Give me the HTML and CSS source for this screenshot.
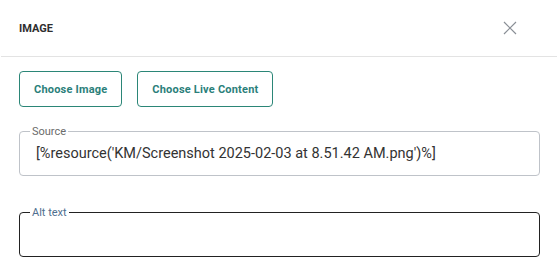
FILE: index.html
```html
<!DOCTYPE html>
<html lang="en">
<head>
    <meta charset="UTF-8">
    <meta name="viewport" content="width=device-width, initial-scale=1.0">
    <title>Image</title>
    <link rel="stylesheet" href="styles.css">
</head>
<body>
    <div class="dialog">
        <div class="dialog-header">
            <h2>IMAGE</h2>
            <button class="close" aria-label="Close">
                <svg width="14" height="14" viewBox="0 0 14 14">
                    <path d="M1 1 L13 13 M13 1 L1 13" stroke="#8a8f96" stroke-width="1.2" fill="none"/>
                </svg>
            </button>
        </div>
        <div class="dialog-body">
            <div class="actions">
                <button class="btn">Choose Image</button>
                <button class="btn">Choose Live Content</button>
            </div>
            <fieldset class="field source">
                <legend>Source</legend>
                <input type="text" value="[%resource('KM/Screenshot 2025-02-03 at 8.51.42 AM.png')%]">
            </fieldset>
            <fieldset class="field alt">
                <legend>Alt text</legend>
                <input type="text" value="">
            </fieldset>
        </div>
    </div>
</body>
</html>
```

FILE: styles.css
```css
body {
    margin: 0;
    font-family: Roboto, "Liberation Sans", sans-serif;
    background-color: white;
    color: #333;
}
.dialog {
    width: 557px;
}
.dialog-header {
    height: 57px;
    padding: 0 19px;
    display: flex;
    align-items: center;
    justify-content: space-between;
    border-bottom: 1px solid #e3e3e3;
    box-sizing: border-box;
    margin-left: 1px;
}
.dialog-header h2 {
    margin: 0;
    font-size: 11px;
    font-weight: bold;
    color: #2e2e2e;
    margin-left: -1px;
}
.close {
    background: none;
    border: none;
    padding: 0;
    margin-right: 21px;
    width: 14px;
    height: 14px;
    cursor: pointer;
    display: flex;
}
.dialog-body {
    padding: 14px 17px 0 19px;
}
.actions {
    display: flex;
    gap: 15px;
}
.btn {
    height: 36px;
    padding: 0 14px;
    background: white;
    border: 1.5px solid #2b8677;
    border-radius: 4px;
    color: #2b7f7a;
    font-family: Roboto, "Liberation Sans", sans-serif;
    font-size: 11px;
    font-weight: bold;
    letter-spacing: 0.2px;
    cursor: pointer;
}
.field {
    margin: 0;
    padding: 0 10px 0 10px;
    border: 1px solid #bfc3c9;
    border-radius: 4px;
    height: 51px;
    box-sizing: border-box;
}
.field legend {
    padding: 0 2px;
    font-size: 11px;
    color: #6b6b6b;
    line-height: 13px;
}
.field input {
    width: 100%;
    border: none;
    outline: none;
    padding: 0 0 0 6px;
    height: 31px;
    box-sizing: border-box;
    font-family: Roboto, "Liberation Sans", sans-serif;
    font-size: 14.5px;
    color: #333;
    background: transparent;
}
.source {
    margin-top: 18px;
}
.alt {
    margin-top: 30px;
    border-color: #222;
}
.alt legend {
    color: #4f6f8f;
}
```
